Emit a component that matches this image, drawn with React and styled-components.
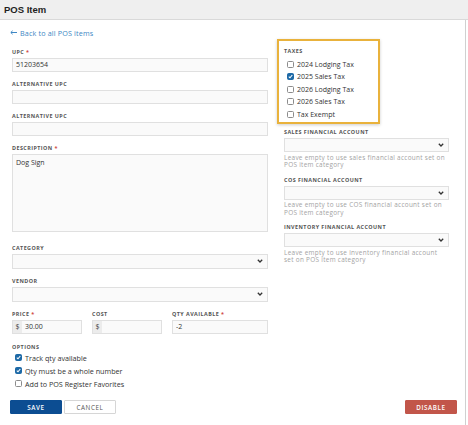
import React from 'react';
import styled, { createGlobalStyle } from 'styled-components';

const GlobalStyle = createGlobalStyle`
  html, body { margin: 0; padding: 0; background: #fff; }
  body { font-family: "Open Sans", "Liberation Sans", sans-serif; color: #333; }
  * { box-sizing: border-box; }
`;

const Page = styled.div`
  width: 468px;
  height: 425px;
  overflow: hidden;
`;

const Header = styled.div`
  height: 20px;
  background: #efefef;
  border-bottom: 1px solid #d9d9d9;
  display: flex;
  align-items: center;
  padding-left: 4px;
  h1 {
    margin: 0;
    font: bold 9.5px "Liberation Sans", sans-serif;
    color: #1f1f1f;
  }
`;

const Body = styled.div`
  width: 466px;
  height: 405px;
  border-right: 1px solid #d0d0d0;
  padding: 8px 8px 0 10px;
`;

const BackLink = styled.a`
  display: flex;
  align-items: center;
  gap: 3px;
  height: 9px;
  font-size: 7.2px;
  letter-spacing: 0.15px;
  color: #3d87c4;
  text-decoration: none;
  cursor: pointer;
`;

const Columns = styled.div`
  display: grid;
  grid-template-columns: 258px 1fr;
  column-gap: 16px;
  margin-top: 11px;
`;

const LeftCol = styled.div`
  padding-left: 2px;
  display: flex;
  flex-direction: column;
`;

const RightCol = styled.div`
  display: flex;
  flex-direction: column;
  padding-right: 8px;
`;

const Field = styled.div`
  display: flex;
  flex-direction: column;
  margin-bottom: ${p => p.$gap ?? 8.5}px;
`;

const Label = styled.div`
  font-size: 5.4px;
  line-height: 8px;
  height: 8px;
  font-weight: 700;
  letter-spacing: 0.45px;
  text-transform: uppercase;
  color: #555;
  margin-bottom: ${p => p.$mb ?? 1.5}px;
  white-space: nowrap;
  span { color: #d0493f; }
`;

const Input = styled.input`
  display: block;
  height: 14px;
  width: 100%;
  border: 1px solid #e0e0e0;
  background: #fafafa;
  font-family: inherit;
  font-size: 7px;
  color: #333;
  padding: 0 0 0 3px;
  margin: 0;
  outline: none;
`;

const TextArea = styled.textarea`
  display: block;
  height: 78px;
  width: 100%;
  border: 1px solid #e0e0e0;
  background: #fafafa;
  font-family: inherit;
  font-size: 7px;
  color: #333;
  padding: 3px 3px;
  margin: 0 0 4px;
  resize: none;
  outline: none;
`;

const Select = styled.div`
  height: ${p => p.$h ?? 15}px;
  border: 1px solid #e0e0e0;
  background: #fafafa;
  display: flex;
  align-items: center;
  justify-content: flex-end;
  padding-right: 4px;
`;

const Help = styled.div`
  font-size: 6.4px;
  line-height: 7.5px;
  letter-spacing: 0.3px;
  color: #a3a3a3;
  margin-top: 1.5px;
`;

const PriceRow = styled.div`
  display: grid;
  grid-template-columns: 70px 70px 1fr;
  column-gap: 10px;
  margin-bottom: 9.5px;
`;

const PriceCell = styled.div`
  display: flex;
  flex-direction: column;
`;

const InputGroup = styled.div`
  display: flex;
  height: 14px;
  border: 1px solid #e0e0e0;
  background: #fafafa;
`;

const Addon = styled.div`
  width: 9px;
  background: #ececec;
  font-size: 7px;
  color: #444;
  display: flex;
  align-items: center;
  justify-content: center;
`;

const GroupInput = styled.input`
  flex: 1;
  min-width: 0;
  border: none;
  background: transparent;
  font-family: inherit;
  font-size: 7px;
  color: #333;
  padding: 0 0 0 3px;
  outline: none;
`;

const TaxBox = styled.div`
  width: 103px;
  margin: -9px 0 0 -7px;
  border: 2px solid #e9b23c;
  box-shadow: 0 1px 3px rgba(0, 0, 0, 0.2);
  padding: 6px 5px 1px 5px;
  margin-bottom: 4.5px;
`;

const CheckRow = styled.label`
  display: flex;
  align-items: center;
  gap: 3px;
  height: ${p => p.$h ?? 12.5}px;
  padding-left: 3px;
  font-size: ${p => p.$size ?? 7}px;
  color: #333;
  white-space: nowrap;
`;

const Box = styled.span`
  width: 7px;
  height: 7px;
  flex-shrink: 0;
  border-radius: 1.5px;
  border: 1px solid ${p => (p.$checked ? '#1d69a6' : '#8c8c8c')};
  background: ${p => (p.$checked ? '#1d69a6' : '#fff')};
  display: inline-flex;
  align-items: center;
  justify-content: center;
`;

const Actions = styled.div`
  display: flex;
  align-items: center;
  margin-top: 10px;
  gap: 2px;
`;

const Button = styled.button`
  height: 14px;
  width: 52px;
  padding: 0;
  font-family: inherit;
  font-size: 6.3px;
  font-weight: ${p => (p.$variant === 'cancel' ? 500 : 600)};
  letter-spacing: 0.6px;
  text-transform: uppercase;
  border-radius: 1px;
  cursor: pointer;
  border: 1px solid ${p => ({ save: '#0c4d92', cancel: '#d6d6d6', danger: '#c2564a' }[p.$variant])};
  background: ${p => ({ save: '#0c4d92', cancel: '#fff', danger: '#c2564a' }[p.$variant])};
  color: ${p => (p.$variant === 'cancel' ? '#555' : '#fff')};
  margin-left: ${p => (p.$push ? 'auto' : '0')};
`;

const Chevron = () => (
  <svg width="6" height="4" viewBox="0 0 6 4">
    <path d="M0.8 0.8 L3 3 L5.2 0.8" fill="none" stroke="#333" strokeWidth="1.3" />
  </svg>
);

const Check = ({ checked }) => (
  <Box $checked={checked}>
    {checked && (
      <svg width="5" height="5" viewBox="0 0 5 5">
        <path d="M0.8 2.6 L2 3.8 L4.3 1" fill="none" stroke="#fff" strokeWidth="1.1" />
      </svg>
    )}
  </Box>
);

const Req = () => <span> *</span>;

const taxes = [
  { name: '2024 Lodging Tax', checked: false },
  { name: '2025 Sales Tax', checked: true },
  { name: '2026 Lodging Tax', checked: false },
  { name: '2026 Sales Tax', checked: false },
  { name: 'Tax Exempt', checked: false },
];

const accounts = [
  { label: 'Sales Financial Account', help: 'Leave empty to use sales financial account set on POS item category' },
  { label: 'COS Financial Account', help: 'Leave empty to use COS financial account set on POS item category' },
  { label: 'Inventory Financial Account', help: 'Leave empty to use inventory financial account set on POS item category' },
];

const options = [
  { name: 'Track qty available', checked: true },
  { name: 'Qty must be a whole number', checked: true },
  { name: 'Add to POS Register Favorites', checked: false },
];

const App = () => {
  return (
    <Page>
      <GlobalStyle />
      <Header>
        <h1>POS Item</h1>
      </Header>
      <Body>
        <BackLink>
          <svg width="7" height="5" viewBox="0 0 7 5">
            <path d="M7 2.5 H1 M2.6 0.8 L0.8 2.5 L2.6 4.2" fill="none" stroke="#3d87c4" strokeWidth="1" />
          </svg>
          Back to all POS items
        </BackLink>
        <Columns>
          <LeftCol>
            <Field>
              <Label>UPC<Req /></Label>
              <Input defaultValue="51203654" />
            </Field>
            <Field>
              <Label>Alternative UPC</Label>
              <Input />
            </Field>
            <Field>
              <Label>Alternative UPC</Label>
              <Input />
            </Field>
            <Field>
              <Label>Description<Req /></Label>
              <TextArea defaultValue="Dog Sign" />
            </Field>
            <Field>
              <Label>Category</Label>
              <Select><Chevron /></Select>
            </Field>
            <Field>
              <Label>Vendor</Label>
              <Select><Chevron /></Select>
            </Field>
            <PriceRow>
              <PriceCell>
                <Label>Price<Req /></Label>
                <InputGroup>
                  <Addon>$</Addon>
                  <GroupInput defaultValue="30.00" />
                </InputGroup>
              </PriceCell>
              <PriceCell>
                <Label>Cost</Label>
                <InputGroup>
                  <Addon>$</Addon>
                  <GroupInput />
                </InputGroup>
              </PriceCell>
              <PriceCell>
                <Label>Qty Available<Req /></Label>
                <Input defaultValue="-2" />
              </PriceCell>
            </PriceRow>
            <Label $mb={0}>Options</Label>
            {options.map(o => (
              <CheckRow key={o.name} $h={13} $size={7.2}>
                <Check checked={o.checked} />
                {o.name}
              </CheckRow>
            ))}
          </LeftCol>
          <RightCol>
            <TaxBox>
              <Label $mb={3}>Taxes</Label>
              {taxes.map(t => (
                <CheckRow key={t.name}>
                  <Check checked={t.checked} />
                  {t.name}
                </CheckRow>
              ))}
            </TaxBox>
            {accounts.map(a => (
              <Field key={a.label} $gap={7}>
                <Label $mb={2}>{a.label}</Label>
                <Select $h={14}><Chevron /></Select>
                <Help>{a.help}</Help>
              </Field>
            ))}
          </RightCol>
        </Columns>
        <Actions>
          <Button $variant="save">Save</Button>
          <Button $variant="cancel">Cancel</Button>
          <Button $variant="danger" $push>Disable</Button>
        </Actions>
      </Body>
    </Page>
  );
};

export default App;
